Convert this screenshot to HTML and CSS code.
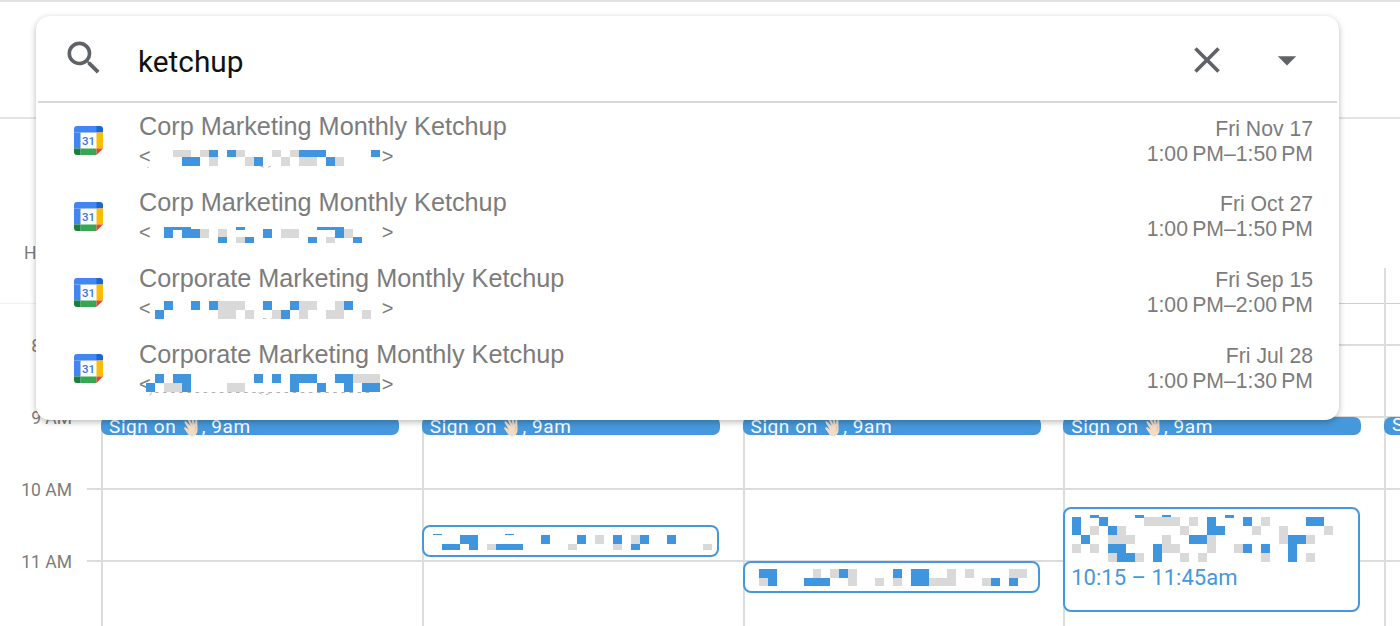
FILE: index.html
```html
<!DOCTYPE html>
<html lang="en">
<head>
  <meta charset="UTF-8" />
  <meta name="viewport" content="width=device-width, initial-scale=1" />
  <title>Calendar search</title>
  <link rel="stylesheet" href="styles.css">
</head>
<body>

  <svg class="defs" aria-hidden="true">
    <symbol id="gcal" viewBox="0 0 29 29">
      <rect width="29" height="29" fill="#fff"/>
      <rect width="23" height="6.5" fill="#4285f4"/>
      <rect y="6.5" width="6.5" height="16" fill="#4285f4"/>
      <rect x="22.5" width="6.5" height="6.5" fill="#1967d2"/>
      <rect x="22.5" y="6.5" width="6.5" height="16" fill="#fbbc04"/>
      <rect x="6.5" y="22.5" width="16" height="6.5" fill="#34a853"/>
      <rect y="22.5" width="6.5" height="6.5" fill="#188038"/>
      <path d="M22.5 22.5H29L22.5 29z" fill="#ea4335"/>
      <text x="14.5" y="19" class="gcal-num">31</text>
    </symbol>
    <symbol id="wave" viewBox="0 0 20 20">
      <path d="M4 4.500 8.500 9 5.800 3.200c-.6-1.400 1.200-2.200 1.900-.9L10.600 8 9.400 1.900c-.3-1.500 1.600-1.900 2-.4l1.600 6.300.3-4.400c.1-1.400 2-1.300 2 .1l.2 7.500c.2 2.800-.2 5.500-2.400 7.300-2.400 1.900-5 1.300-6.800-.7L2.500 12c-1-1.100.4-2.400 1.500-1.500l3 2.400L2.700 6c-.8-1.200.6-2.300 1.300-1.500z" fill="#f3dcc6"/>
      <path d="M13.200 9c.8 1 1.300 3.500-.4 5.400" fill="none" stroke="#d9b596" stroke-width=".7"/>
    </symbol>
  </svg>

  <div class="top-bar"></div>
  <div class="tz-row"><span class="tz-label">H</span></div>

  <!-- Week grid -->
  <div class="week">
    <div class="gutter">
      <div class="hour-label">8 AM</div>
      <div class="hour-label">9 AM</div>
      <div class="hour-label">10 AM</div>
      <div class="hour-label">11 AM</div>
    </div>

    <div class="days">
      <div class="day">
        <div class="sign-on">Sign on <svg class="wave"><use href="#wave"/></svg>, 9am</div>
      </div>

      <div class="day">
        <div class="sign-on">Sign on <svg class="wave"><use href="#wave"/></svg>, 9am</div>
        <div class="event event-a">
          <svg class="mosaic-a" viewBox="0 -.11 32 1.78">
            <path class="thin" d="M0 -.1h1M8 -.1h1"/>
            <path class="px-gray" d="M6 1.500h1M15 1.500h1M18 .5h1M20 1.500h1M22 .5h1M30 1.500h1"/>
            <path class="px-blue" d="M3 .5h2M1 1.500h2M4 1.500h1M7 1.500h3M12 .5h1M16 .5h1M20 .5h1M23 .5h1M22 1.500h1M26 .5h1"/>
          </svg>
        </div>
      </div>

      <div class="day">
        <div class="sign-on">Sign on <svg class="wave"><use href="#wave"/></svg>, 9am</div>
        <div class="event event-b">
          <svg class="mosaic-b" viewBox="0 0 31 1.900">
            <path class="px-gray" d="M0 1.500h1M6 .5h1M8 .5h1M10 .5h1M10 1.500h1M13 1.500h1M15 1.500h1M19 1.500h3M21 .5h1M23 .5h1M25 1.500h1M28 .5h2"/>
            <path class="px-blue" d="M0 .5h2M1 1.500h1M5 1.500h3M9 .5h1M15 .5h1M17 .5h2M17 1.500h2M26 1.500h1M28 1.500h1"/>
          </svg>
        </div>
      </div>

      <div class="day">
        <div class="sign-on">Sign on <svg class="wave"><use href="#wave"/></svg>, 9am</div>
        <div class="event event-c">
          <svg class="mosaic-c" viewBox="0 -.25 30 5.330">
            <path class="thin" d="M2 -.1h1M7 -.1h1M10 -.1h1M17 -.1h1"/>
            <path class="px-gray" d="M8 .5h4M13 .5h1M21 .5h1M2 1.500h1M5 1.500h1M12 1.500h1M20 1.500h1M23 1.500h1M28 1.500h1M4 2.500h3M10 2.500h1M15 2.500h1M23 2.500h1M26 2.500h1M0 3.500h1M2 3.500h1M10 3.500h2M15 3.500h1M18 3.500h1M4 4.500h1M7 4.500h1M12 4.500h1M14 4.500h1M21 4.500h1M26 4.500h1"/>
            <path class="px-blue" d="M0 .5h1M3 .5h1M15 .5h1M19 .5h1M26 .5h2M0 1.500h1M4 1.500h1M15 1.500h2M1 2.500h1M13 2.500h2M24 2.500h2M4 3.500h2M9 3.500h1M19 3.500h1M21 3.500h1M24 3.500h1M5 4.500h2M9 4.500h1M24 4.500h1"/>
          </svg>
          <div class="event-time">10:15 – 11:45am</div>
        </div>
      </div>

      <div class="day day-cut">
        <div class="sign-on">S</div>
      </div>
    </div>
  </div>

  <!-- Search popup -->
  <div class="search-card">
    <div class="search-row">
      <svg class="icon" viewBox="0 0 24 24"><path d="M15.500 14h-.79l-.28-.27A6.471 6.471 0 0 0 16 9.500 6.500 6.500 0 1 0 9.500 16c1.610 0 3.090-.59 4.230-1.570l.27.28v.79l5 4.990L20.490 19l-4.990-5zm-6 0C7.010 14 5 11.990 5 9.500S7.010 5 9.500 5 14 7.010 14 9.500 11.990 14 9.500 14z"/></svg>
      <div class="search-text">ketchup</div>
      <svg class="icon icon-low" viewBox="0 0 24 24"><path d="M19 6.410 17.590 5 12 10.590 6.410 5 5 6.410 10.590 12 5 17.590 6.410 19 12 13.410 17.590 19 19 17.590 13.410 12z"/></svg>
      <svg class="icon icon-low" viewBox="0 0 24 24"><path d="M7 10l5 5 5-5z"/></svg>
    </div>

    <div class="result">
      <svg class="gcal"><use href="#gcal"/></svg>
      <div class="result-main">
        <div class="result-title">Corp Marketing Monthly Ketchup</div>
        <div class="result-sub">
          <span>&lt;</span>
          <svg class="mosaic row-1" viewBox="0 .22 26 2">
            <path class="px-gray" d="M3 .5h2M6 .5h1M10 .5h1M14 .5h1M16 .5h1M7 1.500h1M11 1.500h1M15 1.500h1M17 1.500h2M21 1.500h1"/>
            <path class="px-blue" d="M7 .5h1M9 .5h1M17 .5h3M25 .5h1M4 1.500h2M12 1.500h1M20 1.500h1"/>
            <path class="remnant" d="M12.700 2q.6.3 1.200 0M.3 2.100l-.15.1"/>
          </svg>
          <span>&gt;</span>
        </div>
      </div>
      <div class="result-when">
        <div>Fri Nov 17</div>
        <div>1:00&#8239;PM–1:50&#8239;PM</div>
      </div>
    </div>

    <div class="result">
      <svg class="gcal"><use href="#gcal"/></svg>
      <div class="result-main">
        <div class="result-title">Corp Marketing Monthly Ketchup</div>
        <div class="result-sub">
          <span>&lt;</span>
          <svg class="mosaic row-2" viewBox="0 -.26 26 1.810">
            <path class="thin" d="M2 -.13h3M10 -.13h1M19 -.13h3"/>
            <path class="px-gray" d="M6 .5h1M8 .5h1M15 .5h2M22 .5h1M10 1.300h1M20 1.300h1"/>
            <path class="px-blue" d="M2 .5h1M4 .5h2M13 .5h1M21 .5h1M8 1.300h1M11 1.300h1M18 1.300h1M23 1.300h1"/>
          </svg>
          <span>&gt;</span>
        </div>
      </div>
      <div class="result-when">
        <div>Fri Oct 27</div>
        <div>1:00&#8239;PM–1:50&#8239;PM</div>
      </div>
    </div>

    <div class="result">
      <svg class="gcal"><use href="#gcal"/></svg>
      <div class="result-main">
        <div class="result-title">Corporate Marketing Monthly Ketchup</div>
        <div class="result-sub">
          <span>&lt;</span>
          <svg class="mosaic row-3" viewBox="0 0 26 2">
            <path class="px-gray" d="M8 .5h3M17 .5h2M21 .5h1M8 1.500h2M11 1.500h1M14 1.500h1M17 1.500h1M20 1.500h2M24 1.500h1"/>
            <path class="px-blue" d="M2 .5h1M5 .5h1M7 .5h1M13 .5h1M16 .5h1M22 .5h1M1 1.500h1M15 1.500h1"/>
            <path class="remnant" d="M13 1.950q.5.1 1 0"/>
          </svg>
          <span>&gt;</span>
        </div>
      </div>
      <div class="result-when">
        <div>Fri Sep 15</div>
        <div>1:00&#8239;PM–2:00&#8239;PM</div>
      </div>
    </div>

    <div class="result">
      <svg class="gcal"><use href="#gcal"/></svg>
      <div class="result-main">
        <div class="result-title">Corporate Marketing Monthly Ketchup</div>
        <div class="result-sub">
          <span>&lt;</span>
          <svg class="mosaic row-4" viewBox="0 0 26 2.440">
            <path class="px-gray" d="M2 1.500h2M9 1.500h2M23 .5h3"/>
            <path class="px-blue" d="M1 .5h1M3 .5h2M0 1.500h1M4 1.500h1M12 .5h1M14 .5h1M16 .5h3M16 1.500h1M19 1.500h1M21 .5h2M22 1.500h1M24 1.500h2"/>
            <path class="remnant" d="M1 2.050h24M12.500 2.050q.7.5 1.400 0M.6 2.050q0 .3-.3.3"/>
          </svg>
          <span>&gt;</span>
        </div>
      </div>
      <div class="result-when">
        <div>Fri Jul 28</div>
        <div>1:00&#8239;PM–1:30&#8239;PM</div>
      </div>
    </div>
  </div>

</body>
</html>
```

FILE: styles.css
```css
:root {
  --line: #dcdcdc;
  --blue: #4598db;
  --muted: #7c7c7c;
  --icon: #5f6368;
}

body {
  margin: 0;
  width: 1400px;
  height: 626px;
  overflow: hidden;
  background: #ffffff;
  font-family: 'Roboto', sans-serif;
  position: relative;
}

.defs {
  display: none;
}

.top-bar {
  height: 115px;
  border-top: 2px solid #e2e2e2;
  border-bottom: 2px solid #e4e4e4;
}

.tz-row {
  height: 149px;
  display: flex;
  align-items: flex-end;
  padding-left: 24px;
}

.tz-label {
  font-size: 17.5px;
  line-height: 20px;
  margin-bottom: 5px;
  color: var(--muted);
}

/* Week grid */
.week {
  display: flex;
  height: 358px;
}

.gutter {
  width: 87px;
  flex: none;
  box-sizing: border-box;
  padding: 42px 15px 0 0;
  background: linear-gradient(#f1f1f1, #f1f1f1) 0 35px / 100% 1px no-repeat;
}

.hour-label {
  height: 72px;
  display: flex;
  align-items: center;
  justify-content: flex-end;
  font-size: 17.5px;
  color: var(--muted);
}

.days {
  flex: 1;
  min-width: 0;
  display: flex;
  padding-left: 14px;
  background:
    linear-gradient(#cfcfcf, #cfcfcf) 0 35px / 100% 1px no-repeat,
    repeating-linear-gradient(var(--line) 0 2px, transparent 2px 72px) 0 76px / 100% 100% no-repeat;
}

.day {
  width: 320.75px;
  flex: none;
  box-sizing: border-box;
  border-left: 2px solid var(--line);
  position: relative;
}

.day-cut {
  width: auto;
  flex: 1;
  min-width: 0;
}

.sign-on {
  position: absolute;
  top: 149px;
  left: -2px;
  width: 298px;
  height: 18px;
  box-sizing: border-box;
  padding-left: 8px;
  background: var(--blue);
  border-radius: 7px;
  color: #ffffff;
  font-size: 19px;
  line-height: 16px;
  letter-spacing: 0.6px;
  white-space: nowrap;
}

.day-cut .sign-on {
  width: 16px;
  border-radius: 7px 0 0 7px;
  overflow: hidden;
}

.wave {
  width: 20px;
  height: 20px;
  vertical-align: -4px;
}

.event {
  position: absolute;
  left: -2px;
  width: 297px;
  box-sizing: border-box;
  background: #ffffff;
  border: 2px solid var(--blue);
  border-radius: 8px;
}

.event-a {
  top: 257px;
  height: 32px;
  padding: 7px 0 0 9px;
}

.event-b {
  top: 293px;
  height: 32px;
  padding: 6px 0 0 13px;
}

.event-c {
  top: 239px;
  height: 105px;
  padding: 6px 0 0 7px;
}

.mosaic-a {
  display: block;
  width: 288px;
  height: 16px;
}

.mosaic-b {
  display: block;
  width: 279px;
  height: 17px;
}

.mosaic-c {
  display: block;
  width: 270px;
  height: 48px;
}

.event-time {
  margin: 3px 0 0 -1px;
  font-size: 22px;
  line-height: 24px;
  color: var(--blue);
}

/* Mosaic cells are drawn as unit-wide strokes */
.px-gray, .px-blue, .thin, .remnant {
  fill: none;
  stroke-width: 1;
  shape-rendering: crispEdges;
}

.px-gray {
  stroke: #d9d9d9;
}

.px-blue {
  stroke: #4096de;
}

.thin {
  stroke: #4096de;
  stroke-width: 0.3;
}

.remnant {
  stroke: #a8a8a8;
  stroke-width: 0.1;
  stroke-dasharray: .4 .5;
  shape-rendering: auto;
}

/* Search popup */
.search-card {
  position: absolute;
  top: 16px;
  left: 36px;
  width: 1303px;
  height: 404px;
  background: #ffffff;
  border-radius: 14px;
  box-shadow: 0 2px 6px rgba(0, 0, 0, 0.28);
}

.search-row {
  height: 86.5px;
  display: flex;
  align-items: center;
  gap: 36px;
  padding: 0 28px 0 24px;
  box-sizing: border-box;
  margin: 0 2px;
  border-bottom: 2px solid #d8d8d8;
}

.icon {
  width: 44px;
  height: 44px;
  flex: none;
  fill: var(--icon);
}

.icon-low {
  margin-top: 3px;
}

.search-text {
  flex: 1;
  margin-left: -4px;
  padding-top: 6px;
  font-size: 29.8px;
  color: #111111;
}

.result {
  height: 75.9px;
  display: flex;
  align-items: center;
  padding: 0 26px 0 38px;
}

.gcal {
  width: 29px;
  height: 29px;
  flex: none;
  border-radius: 3px;
  margin-right: 36px;
}

.gcal-num {
  font-size: 11.5px;
  font-weight: 500;
  text-anchor: middle;
  fill: #3b78d8;
}

.result-main {
  flex: 1;
  align-self: flex-start;
  padding-top: 9.5px;
}

.result-title {
  font-family: 'Liberation Sans', sans-serif;
  font-size: 25.25px;
  line-height: 28px;
  color: var(--muted);
  white-space: nowrap;
}

.result-sub {
  display: flex;
  height: 28px;
  margin-top: 2px;
  line-height: 28px;
  font-family: 'Liberation Sans', sans-serif;
  font-size: 20px;
  color: var(--muted);
}

.mosaic {
  width: 234px;
  flex: none;
  margin-left: -5px;
  margin-right: 2px;
}

.row-1 {
  height: 18px;
  margin-top: 8px;
}

.row-2 {
  height: 16.3px;
  margin-top: 8.7px;
}

.row-3 {
  height: 18px;
  margin-top: 7.7px;
}

.row-4 {
  height: 22px;
  margin-top: 4px;
}

.result-when {
  align-self: flex-start;
  padding-top: 13px;
  text-align: right;
  font-family: 'Liberation Sans', sans-serif;
  font-size: 21.2px;
  line-height: 25px;
  color: var(--muted);
}
```
